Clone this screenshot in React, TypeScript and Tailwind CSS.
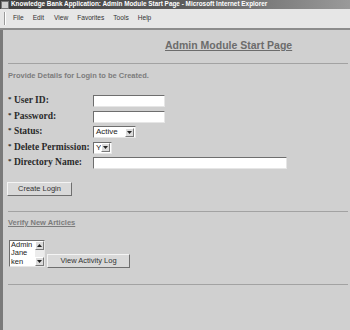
const ui = "font-['Liberation_Sans',Arial,sans-serif]";
const serif = "font-['Liberation_Serif','Times_New_Roman',serif]";

function TextBox({ w }: { w: string }) {
  return (
    <div
      className={`${w} h-[12px] bg-white border border-t-[#6e6e6e] border-l-[#6e6e6e] border-b-[#e6e6e6] border-r-[#e6e6e6]`}
    />
  );
}

function Arrow({ up }: { up?: boolean }) {
  return (
    <svg width="5" height="3" viewBox="0 0 5 3">
      <path d={up ? "M0 3 L2.5 0 L5 3 Z" : "M0 0 L5 0 L2.5 3 Z"} fill="#222" />
    </svg>
  );
}

function ArrowBtn({ up }: { up?: boolean }) {
  return (
    <div className="w-[9px] h-[9px] bg-[#dcdcdc] border border-t-white border-l-white border-b-[#7a7a7a] border-r-[#7a7a7a] flex items-center justify-center">
      <Arrow up={up} />
    </div>
  );
}

function Select({ value, w }: { value: string; w: string }) {
  return (
    <div
      className={`${w} h-[12px] bg-white border border-t-[#6e6e6e] border-l-[#6e6e6e] border-b-[#e6e6e6] border-r-[#e6e6e6] flex items-center justify-between pl-[2px] pr-[1px]`}
    >
      <span className={`${ui} text-[8px] leading-none text-[#222]`}>{value}</span>
      <ArrowBtn />
    </div>
  );
}

function Label({ text }: { text: string }) {
  return (
    <div className={`${serif} w-[85px] shrink-0 text-[9.5px] font-bold text-[#2a2a2a] leading-none whitespace-nowrap`}>
      <span className="text-[7px] align-top">*</span> {text}
    </div>
  );
}

function Button({ label, w }: { label: string; w: string }) {
  return (
    <div
      className={`${w} h-[14px] bg-[#d9d9d9] border border-t-[#f4f4f4] border-l-[#f4f4f4] border-b-[#6f6f6f] border-r-[#6f6f6f] flex items-center justify-center ${ui} text-[7.5px] text-[#333]`}
    >
      {label}
    </div>
  );
}

export default function App() {
  const menu = [
    { t: "File", ml: "ml-[7px]" },
    { t: "Edit", ml: "ml-[9px]" },
    { t: "View", ml: "ml-[10px]" },
    { t: "Favorites", ml: "ml-[9px]" },
    { t: "Tools", ml: "ml-[9px]" },
    { t: "Help", ml: "ml-[9px]" },
  ];

  return (
    <div className={`w-[350px] h-[330px] overflow-hidden flex flex-col bg-[#d0d0d0] ${ui}`}>
      {/* window title */}
      <div className="h-[9px] shrink-0 flex items-center bg-gradient-to-r from-[#3e3e3e] via-[#5a5a5a] to-[#9a9a9a]">
        <div className="w-[8px] h-[8px] ml-[1px] bg-[#cfcfcf] border border-[#777]" />
        <span className="ml-[2px] text-[6.4px] font-bold text-white whitespace-nowrap leading-none">
          Knowledge Bank Application: Admin Module Start Page - Microsoft Internet Explorer
        </span>
      </div>

      {/* menu bar */}
      <div className="h-[19px] shrink-0 flex items-center bg-[#e6e6e6]">
        <div className="ml-[4px] w-[2px] h-[13px] border-l border-l-[#9a9a9a] border-r border-r-white" />
        {menu.map((m) => (
          <span key={m.t} className={`${m.ml} text-[6.6px] text-[#333] leading-none`}>
            {m.t}
          </span>
        ))}
      </div>
      <div className="h-[2px] shrink-0 bg-[#8c8c8c]" />

      {/* page */}
      <div className="flex-1 flex flex-col border-l-[3px] border-[#7a7a7a] pl-[5px] pr-[2px]">
        <div className="mt-[9px] h-[12px] pl-[157px] text-[10.5px] leading-[12px] font-bold text-[#6c6c6c] underline">
          Admin Module Start Page
        </div>
        <div className="mt-[12px] h-px bg-[#a2a2a2]" />

        <div className="mt-[7px] h-[10px] text-[7.5px] leading-[10px] font-bold text-[#7c7c7c]">
          Provide Details for Login to be Created.
        </div>

        <div className="mt-[12px] flex flex-col">
          <div className="h-[16px] flex items-center">
            <Label text="User ID:" />
            <TextBox w="w-[72px]" />
          </div>
          <div className="h-[15px] flex items-center">
            <Label text="Password:" />
            <TextBox w="w-[72px]" />
          </div>
          <div className="h-[16px] flex items-center">
            <Label text="Status:" />
            <Select value="Active" w="w-[43px]" />
          </div>
          <div className="h-[15px] flex items-center">
            <Label text="Delete Permission:" />
            <Select value="Y" w="w-[19px]" />
          </div>
          <div className="h-[16px] flex items-center">
            <Label text="Directory Name:" />
            <TextBox w="w-[194px]" />
          </div>
        </div>

        <div className="mt-[11px] ml-[-1px]">
          <Button label="Create Login" w="w-[65px]" />
        </div>

        <div className="mt-[15px] h-px bg-[#a2a2a2]" />

        <div className="mt-[6px] h-[10px] text-[7.5px] leading-[10px] font-bold text-[#7c7c7c] underline">
          Verify New Articles
        </div>

        <div className="mt-[12px] flex items-end">
          <div className="ml-[1px] w-[36px] h-[27px] bg-white border border-t-[#6e6e6e] border-l-[#6e6e6e] border-b-[#e6e6e6] border-r-[#e6e6e6] flex">
            <div className="flex-1 pl-[1px] flex flex-col text-[7.5px] leading-[8.3px] text-[#222]">
              <span>Admin</span>
              <span>Jane</span>
              <span>ken</span>
            </div>
            <div className="w-[9px] flex flex-col justify-between bg-[#ececec]">
              <ArrowBtn up />
              <ArrowBtn />
            </div>
          </div>
          <div className="ml-[2px] mb-[-1px]">
            <Button label="View Activity Log" w="w-[83px] h-[12px]" />
          </div>
        </div>

        <div className="mt-[17px] h-px bg-[#a2a2a2]" />
      </div>
    </div>
  );
}
